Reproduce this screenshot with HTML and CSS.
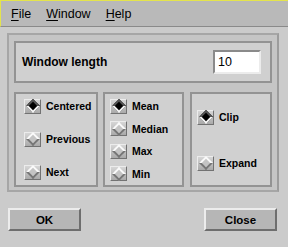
FILE: index.html
```html
<!DOCTYPE html>
<html lang="en">
<head>
  <meta charset="UTF-8">
  <title>Window length</title>
  <link rel="stylesheet" href="styles.css">
</head>
<body>
  <div class="menubar">
    <span class="menu"><u>F</u>ile</span>
    <span class="menu"><u>W</u>indow</span>
    <span class="menu"><u>H</u>elp</span>
  </div>

  <div class="frame">
    <div class="box lengthbox">
      <span class="lbl">Window length</span>
      <div class="field">10</div>
    </div>

    <div class="row">
      <div class="box group left">
        <div class="opt"><span class="ind on"></span>Centered</div>
        <div class="opt"><span class="ind"></span>Previous</div>
        <div class="opt"><span class="ind"></span>Next</div>
      </div>
      <div class="box group mid">
        <div class="opt"><span class="ind on"></span>Mean</div>
        <div class="opt"><span class="ind"></span>Median</div>
        <div class="opt"><span class="ind"></span>Max</div>
        <div class="opt"><span class="ind"></span>Min</div>
      </div>
      <div class="box group right">
        <div class="opt"><span class="ind on"></span>Clip</div>
        <div class="opt"><span class="ind"></span>Expand</div>
      </div>
    </div>
  </div>

  <div class="buttons">
    <button class="btn">OK</button>
    <button class="btn">Close</button>
  </div>
</body>
</html>
```

FILE: styles.css
```css
body {
  margin: 0;
  background: #cbcbcb;
  font-family: "Liberation Sans", Arial, sans-serif;
  color: #000;
}
.menubar {
  display: flex;
  gap: 15px;
  height: 25px;
  align-items: center;
  padding-left: 10px;
  background: #b9b9b9;
  border-top: 1px solid #e4e44c;
  border-left: 1px solid #e4e44c;
  border-bottom: 1px solid #8a8a8a;
  font-size: 12.5px;
}
.menu u {
  text-underline-offset: 2px;
}
.frame {
  width: 272px;
  box-sizing: border-box;
  margin: 6px 0 0 7px;
  padding: 6px 5px 3px 5px;
  border: 2px solid #a6a6a6;
  border-right-color: #9c9c9c;
  background: #c5c5c5;
}
.box {
  box-sizing: border-box;
  border: 2px solid #939393;
  background: #d0d0d0;
}
.lengthbox {
  height: 42px;
  display: flex;
  align-items: center;
  justify-content: space-between;
  padding: 0 9px 0 6px;
}
.lbl {
  font-weight: bold;
  font-size: 12px;
}
.field {
  width: 48px;
  height: 24px;
  box-sizing: border-box;
  background: #fff;
  border: 2px solid;
  border-color: #8a8a8a #ececec #ececec #8a8a8a;
  font-size: 12.5px;
  padding: 3px 0 0 3px;
}
.row {
  display: flex;
  margin-top: 9px;
}
.group {
  height: 95px;
  display: flex;
  flex-direction: column;
}
.left {
  width: 84px;
  padding: 4px 0 0 8px;
  gap: 17px;
}
.mid {
  width: 81px;
  margin-left: 5px;
  padding: 4px 0 0 5px;
  gap: 6.5px;
}
.right {
  width: 82px;
  margin-left: 6px;
  padding: 15px 0 0 5px;
  gap: 30px;
}
.opt {
  display: flex;
  align-items: center;
  gap: 5px;
  height: 16px;
  font-weight: bold;
  font-size: 10.5px;
}
.ind {
  width: 17px;
  height: 15px;
  box-sizing: border-box;
  display: flex;
  align-items: center;
  justify-content: center;
  border: 1px solid;
  border-color: #ececec #727272 #727272 #ececec;
  background: linear-gradient(#d6d6d6, #a9a9a9);
}
.ind::before {
  content: "";
  width: 6px;
  height: 6px;
  transform: rotate(45deg);
  border: 2px solid;
  border-color: #fafafa #767676 #767676 #fafafa;
  background: #c4c4c4;
}
.ind.on::before {
  border-color: #555 #f4f4f4 #f4f4f4 #555;
  background: #000;
}
.buttons {
  display: flex;
  justify-content: space-between;
  padding: 0 11px 0 8px;
  margin-top: 16px;
}
.btn {
  width: 73px;
  height: 23px;
  box-sizing: border-box;
  border: 2px solid;
  border-color: #ececec #6e6e6e #6e6e6e #ececec;
  background: #b6b6b6;
  font-family: "Liberation Sans", Arial, sans-serif;
  font-weight: bold;
  font-size: 11.5px;
  padding: 0;
  color: #000;
}
```
